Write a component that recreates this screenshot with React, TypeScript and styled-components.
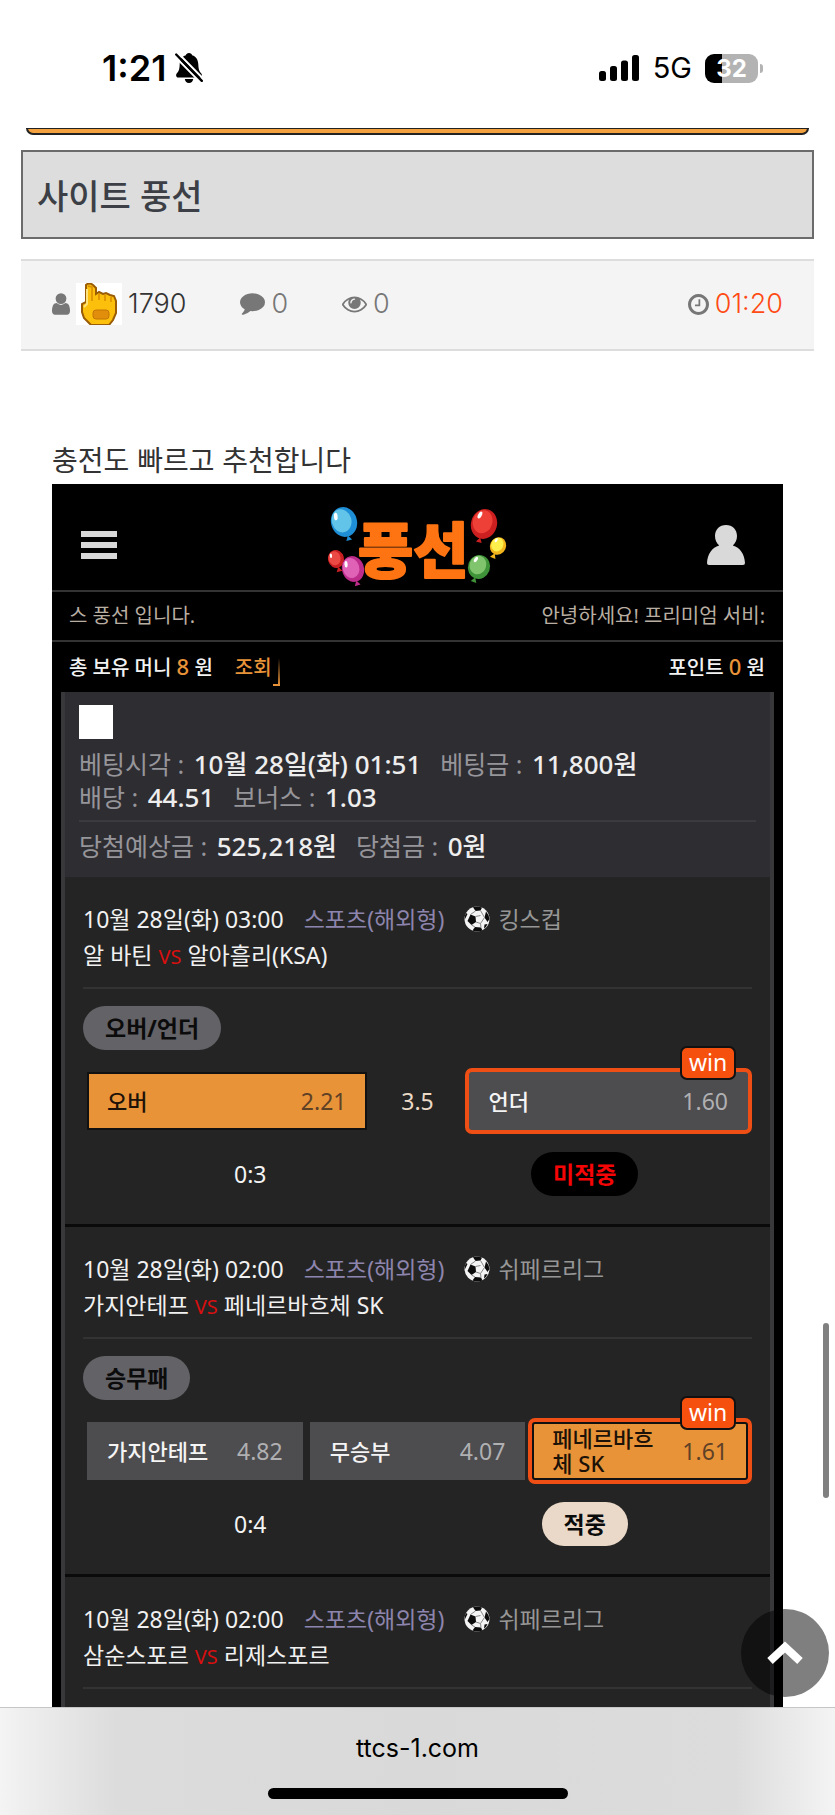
import React from "react";
import styled, { createGlobalStyle } from "styled-components";

const GlobalStyle = createGlobalStyle`
  *, *::before, *::after { box-sizing: border-box; }
  body { margin: 0; background: #fff; }
  button { border: 0; padding: 0; margin: 0; background: none; font: inherit; color: inherit; cursor: pointer; }
  svg { display: block; flex: none; }
`;

const systemFont = `Inter, "Noto Sans CJK KR", sans-serif`;
const siteFont = `"Noto Sans", "Noto Sans CJK KR", sans-serif`;

const Page = styled.div`
  display: flex;
  flex-direction: column;
  min-height: 100vh;
  font-family: ${systemFont};
  color: #333;
`;

const StatusBar = styled.header`
  display: flex;
  align-items: center;
  justify-content: space-between;
  height: 128px;
  padding: 8px 73px 0 102px;
  color: #000;
`;

const StatusGroup = styled.div<{ $gap: number }>`
  display: flex;
  align-items: center;
  gap: ${(p) => p.$gap}px;
`;

const Clock = styled.time`
  font-size: 36px;
  line-height: 40px;
  font-weight: 600;
`;

const Network = styled.span`
  font-size: 29px;
  line-height: 40px;
`;

const Battery = styled.div`
  position: relative;
  display: flex;
  align-items: center;
  justify-content: center;
  width: 53px;
  height: 29px;
  margin-right: 4px;
  border-radius: 9px;
  background: linear-gradient(90deg, #000 32%, #b3b3b3 32%);
  color: #fff;
  font-size: 24px;
  line-height: 29px;
  font-weight: 700;
  &::after {
    content: "";
    position: absolute;
    right: -5px;
    top: 10px;
    width: 3px;
    height: 9px;
    border-radius: 0 3px 3px 0;
    background: #b3b3b3;
  }
`;

const BannerEdge = styled.div`
  height: 7px;
  margin: 0 26px;
  border: 2px solid #222;
  border-top-width: 1px;
  border-radius: 0 0 9px 9px;
  background: #f3a13f;
`;

const TitleBox = styled.h1`
  margin: 15px 21px 0;
  padding: 2px 14px 0;
  border: 2px solid #6b6b6b;
  background: #ddd;
  color: #3c3f45;
  font-size: 34px;
  line-height: 86px;
  font-weight: 500;
  height: 89px;
`;

const MetaBar = styled.div`
  display: flex;
  align-items: center;
  gap: 54px;
  height: 92px;
  margin: 20px 21px 0;
  padding: 0 31px 2px;
  border: solid #ddd;
  border-width: 2px 0;
  background: #f4f4f4;
  color: #777;
  font-size: 27px;
  line-height: 32px;
  font-weight: 300;
`;

const MetaItem = styled.span<{ $color?: string; $end?: boolean }>`
  display: flex;
  align-items: center;
  gap: 6px;
  margin-left: ${(p) => (p.$end ? "auto" : "0")};
  color: ${(p) => p.$color ?? "#777"};
`;

const Article = styled.main`
  display: flex;
  flex: 1;
  flex-direction: column;
  padding: 87px 52px 0;
`;

const Lead = styled.p`
  margin: 0;
  font-size: 28px;
  line-height: 46px;
  font-weight: 400;
`;

const Shot = styled.section`
  display: flex;
  flex: 1;
  flex-direction: column;
  background: #000;
  font-family: ${siteFont};
`;

const AppHeader = styled.div`
  display: flex;
  align-items: center;
  justify-content: space-between;
  height: 108px;
  padding: 16px 38px 0 29px;
  border-bottom: 2px solid #333;
`;

const IconButton = styled.button`
  display: flex;
`;

const InfoRow = styled.div<{ $tone: string; $weight: number; $lined?: boolean }>`
  display: flex;
  align-items: center;
  justify-content: space-between;
  height: 50px;
  padding: 0 18px 0 17px;
  border-bottom: ${(p) => (p.$lined ? "2px solid #333" : "0")};
  color: ${(p) => p.$tone};
  font-size: 20px;
  line-height: 30px;
  font-weight: ${(p) => p.$weight};
`;

const Orange = styled.span`
  color: #e99339;
  font-size: 22px;
`;

const LookupButton = styled.button`
  position: relative;
  margin-left: 22px;
  padding-right: 5px;
  color: #e99339;
  &::after {
    content: "";
    position: absolute;
    right: -3px;
    bottom: -3px;
    width: 7px;
    height: 28px;
    background:
      linear-gradient(180deg, transparent, #e99339) right / 2px 100% no-repeat,
      linear-gradient(#e99339, #e99339) bottom / 100% 2px no-repeat;
  }
`;

const Slip = styled.div`
  display: flex;
  flex: 1;
  flex-direction: column;
  margin: 0 9px;
  border: solid #38373a;
  border-width: 0 4px;
  background: #242424;
`;

const Summary = styled.div`
  padding: 13px 14px 14px;
  background: #2e2d32;
  color: #eee;
  font-size: 26px;
  line-height: 33px;
`;

const SlipCheck = styled.input`
  appearance: none;
  display: block;
  width: 34px;
  height: 34px;
  margin: 0 0 9px;
  background: #fff;
`;

const SummaryLine = styled.div`
  display: flex;
  flex-wrap: wrap;
  column-gap: 19px;
  height: 33px;
`;

const SummaryRule = styled.hr`
  height: 2px;
  margin: 6px 0 8px;
  border: 0;
  background: #3b3a3f;
`;

const Fact = styled.span`
  font-weight: 500;
`;

const FactName = styled.span`
  margin-right: 3px;
  color: #96959a;
  font-size: 25px;
  font-weight: 400;
`;

const Match = styled.article<{ $last?: boolean }>`
  padding: 24px 18px ${(p) => (p.$last ? 0 : 28)}px;
  border-bottom: ${(p) => (p.$last ? "0" : "3px solid #0a0a0a")};
`;

const MatchHead = styled.div`
  padding-bottom: 14px;
  border-bottom: 2px solid #333;
  color: #f1f1f1;
  font-size: 23px;
  line-height: 36px;
`;

const MatchInfo = styled.div`
  display: flex;
  align-items: center;
  height: 36px;
`;

const Kind = styled.span`
  margin: 0 20px;
  color: #8d85ad;
`;

const League = styled.span`
  margin-left: 8px;
  color: #969696;
`;

const Teams = styled.div`
  height: 36px;
`;

const Versus = styled.span`
  margin: 0 6px;
  color: #d80f0f;
  font-size: 20px;
`;

const Pill = styled.span<{ $bg: string; $fg: string }>`
  display: inline-block;
  height: 44px;
  padding: 0 22px;
  border-radius: 22px;
  background: ${(p) => p.$bg};
  color: ${(p) => p.$fg};
  font-size: 23px;
  line-height: 44px;
  font-weight: 700;
`;

const Market = styled.div`
  display: flex;
  margin-top: 17px;
`;

const OddsGrid = styled.div<{ $columns: string; $gap: number }>`
  display: grid;
  grid-template-columns: ${(p) => p.$columns};
  gap: ${(p) => p.$gap}px;
  height: 58px;
  margin: 22px 4px;
`;

const OddsButton = styled.button<{ $picked?: boolean; $won?: boolean }>`
  position: relative;
  display: flex;
  align-items: center;
  justify-content: space-between;
  gap: 16px;
  padding: 0 ${(p) => (p.$picked ? 18 : 20)}px;
  border: ${(p) => (p.$picked ? "2px solid #111" : "0")};
  border-radius: ${(p) => (p.$won ? 3 : 0)}px;
  box-shadow: ${(p) => (p.$won ? "0 0 0 4px #ef4f14" : "none")};
  background: ${(p) => (p.$picked ? "#e99339" : "#4d4c4f")};
  color: ${(p) => (p.$picked ? "#1c1208" : "#f4f4f4")};
  font-size: 22px;
  line-height: 25px;
  font-weight: 500;
  text-align: left;
  word-break: break-all;
`;

const Rate = styled.span<{ $picked?: boolean }>`
  color: ${(p) => (p.$picked ? "#5f4126" : "#b0b0b2")};
  font-size: 23px;
  font-weight: 400;
  word-break: normal;
`;

const WinBadge = styled.span<{ $picked?: boolean }>`
  position: absolute;
  right: ${(p) => (p.$picked ? 10 : 12)}px;
  top: ${(p) => (p.$picked ? -28 : -26)}px;
  width: 56px;
  height: 34px;
  border: 2px solid #111;
  border-radius: 7px;
  background: #f6500f;
  color: #fff;
  font-size: 23px;
  line-height: 28px;
  font-weight: 400;
  text-align: center;
`;

const Baseline = styled.span`
  align-self: center;
  color: #ead9c6;
  font-size: 23px;
  text-align: center;
`;

const ResultRow = styled.div`
  display: grid;
  grid-template-columns: 1fr 1fr;
  align-items: center;
  justify-items: center;
  height: 44px;
  color: #f4f4f4;
  font-size: 23px;
`;

const TopButton = styled.button`
  position: fixed;
  right: 6px;
  bottom: 118px;
  display: flex;
  align-items: center;
  justify-content: center;
  width: 88px;
  height: 88px;
  border-radius: 50%;
  background: rgba(0, 0, 0, 0.5);
`;

const ScrollThumb = styled.div`
  position: fixed;
  right: 6px;
  bottom: 317px;
  width: 6px;
  height: 175px;
  border-radius: 3px;
  background: #808080;
`;

const BrowserBar = styled.footer`
  display: flex;
  flex-direction: column;
  align-items: center;
  justify-content: space-between;
  height: 108px;
  padding: 25px 0 16px;
  border-top: 1px solid #c6c6c6;
  background: linear-gradient(90deg, #f4f4f4 0, #f0f0f0 2%, #dcdcdc 14%, #d9d9d9 50%, #dcdcdc 88%, #f0f0f0 98%, #f4f4f4 100%);
  color: #000;
`;

const Address = styled.button`
  font-size: 25px;
  line-height: 30px;
`;

const HomeBar = styled.div`
  width: 300px;
  height: 11px;
  border-radius: 6px;
  background: #000;
`;

const BellOff = () => (
  <svg width="28" height="30" viewBox="0 0 28 30" aria-hidden="true">
    <path d="M14 0c1.700 0 2.800 1 3.100 2.200 4 1.200 6 4.600 6.200 9 .2 5.600 1.200 7.300 3 9.300 1.100 1.200.6 4-1.300 4H3c-1.900 0-2.400-2.800-1.300-4 1.800-2 2.800-3.700 3-9.300.2-4.400 2.200-7.800 6.200-9C11.200 1 12.300 0 14 0z" fill="#000" />
    <path d="M9.800 26h8.400c-.4 2.400-1.900 4-4.200 4s-3.800-1.600-4.200-4z" fill="#000" />
    <path d="M-1 2.500l27 27.500M3 0l27 27.500" stroke="#fff" strokeWidth="2" />
    <path d="M1.200 1.500l25.600 26.300" stroke="#000" strokeWidth="2.400" strokeLinecap="round" />
  </svg>
);

const Signal = () => (
  <svg width="41" height="26" viewBox="0 0 41 26" aria-hidden="true">
    <rect x="0" y="16" width="7" height="10" rx="2.500" />
    <rect x="11" y="11" width="7" height="15" rx="2.500" />
    <rect x="22" y="5.500" width="7" height="20.500" rx="2.500" />
    <rect x="33" y="0" width="7" height="26" rx="2.500" />
  </svg>
);

const UserIcon = () => (
  <svg width="18" height="22" viewBox="256 128 1280 1536" fill="#777" aria-hidden="true">
    <path d="M1536 1399q0 109-62.500 187t-150.500 78h-854q-88 0-150.500-78t-62.500-187q0-85 8.500-160.500t31.500-152 58.500-131 94-89 134.500-34.500q131 128 313 128t313-128q76 0 134.500 34.500t94 89 58.500 131 31.500 152 8.500 160.500zm-256-887q0 159-112.500 271.500t-271.500 112.500-271.500-112.500-112.500-271.500 112.500-271.500 271.500-112.500 271.500 112.500 112.500 271.500z" />
  </svg>
);

const CommentIcon = () => (
  <svg width="25" height="22" viewBox="0 256 1792 1536" fill="#777" aria-hidden="true">
    <path d="M1792 896q0 174-120 321.500t-326 233-450 85.500q-70 0-145-8-198 175-460 242-49 14-114 22-17 2-30.500-9t-17.500-29v-1q-3-4-.5-12t2-10 4.500-9.500l6-9 7-8.500 8-9q7-8 31-34.500t34.500-38 31-39.500 32.500-51 27-59 26-76q-157-89-247.500-220t-90.500-281q0-130 71-248.500t191-204.500 286-136.500 348-50.500q244 0 450 85.500t326 233 120 321.500z" />
  </svg>
);

const EyeIcon = () => (
  <svg width="25" height="17" viewBox="0 384 1792 1152" fill="#777" aria-hidden="true">
    <path d="M1664 960q-152-236-381-353 61 104 61 225 0 185-131.500 316.500t-316.500 131.500-316.500-131.500-131.500-316.500q0-121 61-225-229 117-381 353 133 205 333.500 326.500t434.500 121.500 434.500-121.500 333.500-326.500zm-720-384q0-20-14-34t-34-14q-125 0-214.500 89.500t-89.500 214.500q0 20 14 34t34 14 34-14 14-34q0-86 61-147t147-61q20 0 34-14t14-34zm848 384q0 34-20 69-140 230-376.500 368.500t-499.500 138.500-499.500-139-376.500-368q-20-35-20-69t20-69q140-229 376.500-368t499.500-139 499.500 139 376.500 368q20 35 20 69z" />
  </svg>
);

const ClockIcon = () => (
  <svg width="21" height="21" viewBox="128 128 1536 1536" fill="#777" aria-hidden="true">
    <path d="M1024 544v448q0 14-9 23t-23 9h-320q-14 0-23-9t-9-23v-64q0-14 9-23t23-9h224v-352q0-14 9-23t23-9h64q14 0 23 9t9 23zm416 352q0-148-73-273t-198-198-273-73-273 73-198 198-73 273 73 273 198 198 273 73 273-73 198-198 73-273zm224 0q0 209-103 385.500t-279.500 279.500-385.500 103-385.500-103-279.500-279.500-103-385.500 103-385.500 279.500-279.500 385.500-103 385.500 103 279.500 279.500 103 385.500z" />
  </svg>
);

const HandAvatar = () => (
  <svg width="46" height="42" viewBox="0 0 46 42" aria-hidden="true">
    <rect width="46" height="42" fill="#fff" />
    <path d="M10 2q3-3 7 0l3 3v6l3-2 4 2 3-1 4 2 4 1 2 5v12l-3 7-4 5H15l-7-7-2-6v-8l4-2V2z" fill="#fbbf0c" stroke="#9a5c05" strokeWidth="2" />
    <path d="M12 3l4 1v14M23 11v6M29 12v6M35 14v5" fill="none" stroke="#d98c00" strokeWidth="1.500" />
    <path d="M11 6v15l-3 3" fill="none" stroke="#ffe27a" strokeWidth="2" />
    <rect x="17" y="27" width="16" height="9" rx="3" fill="#e08e0b" stroke="#c57605" />
  </svg>
);

const MenuIcon = () => (
  <svg width="36" height="28" viewBox="0 0 36 28" fill="#d8d8d8" aria-hidden="true">
    <rect width="36" height="6" />
    <rect y="11" width="36" height="6" />
    <rect y="22" width="36" height="6" />
  </svg>
);

const MemberIcon = () => (
  <svg width="38" height="40" viewBox="0 0 38 40" fill="#d9d9d9" aria-hidden="true">
    <path d="M19 0c6.500 0 11 4.500 11 11 0 4-1.500 7-4.200 9.500C33 22.500 37.500 29 38 38q0 2-2 2H2q-2 0-2-2c.5-9 5-15.500 12.200-17.500C9.500 18 8 15 8 11 8 4.500 12.500 0 19 0z" />
  </svg>
);

interface BalloonProps {
  x: number;
  y: number;
  rx: number;
  ry: number;
  dark: string;
  light: string;
  tilt: number;
}

const Balloon = ({ x, y, rx, ry, dark, light, tilt }: BalloonProps) => (
  <g transform={`translate(${x} ${y}) rotate(${tilt})`}>
    <path d={`M0 ${ry - 1}l-3 5h6z`} fill={dark} />
    <ellipse rx={rx} ry={ry} fill={dark} />
    <ellipse cx={-rx * 0.15} cy={-ry * 0.12} rx={rx * 0.75} ry={ry * 0.78} fill={light} />
    <ellipse cx={-rx * 0.6} cy={-ry * 0.4} rx={rx * 0.14} ry={ry * 0.25} fill="#fff" transform="rotate(12)" />
  </g>
);

const Logo = () => (
  <svg width="198" height="88" viewBox="-14 1 198 88" role="img" aria-label="풍선">
    <Balloon x={17} y={22} rx={13} ry={15} dark="#1e8fd6" light="#62c4e8" tilt={-16} />
    <Balloon x={9} y={59} rx={8} ry={9} dark="#c91f22" light="#ea4a43" tilt={-16} />
    <Balloon x={157} y={24} rx={13} ry={15} dark="#cc1f1f" light="#ef4038" tilt={16} />
    <Balloon x={171} y={46} rx={8} ry={9} dark="#f2b61c" light="#fdf04c" tilt={24} />
    <Balloon x={152} y={67} rx={11} ry={12} dark="#3f9339" light="#80c56d" tilt={20} />
    <text x="31" y="73" fontFamily='"Noto Sans CJK KR", sans-serif' fontSize="60" fontWeight="900" fill="#ff7412" stroke="#ff7412" strokeWidth="2" strokeLinejoin="round">
      풍선
    </text>
    <Balloon x={26} y={69} rx={11} ry={13} dark="#bd2b8b" light="#df62b6" tilt={-16} />
  </svg>
);

const SoccerBall = () => (
  <svg width="26" height="26" viewBox="0 0 26 26" aria-hidden="true">
    <circle cx="13" cy="13" r="12.500" fill="#f4f4f4" />
    <path d="M6.500 8.500l5 2 .5 5.500-4.500 3-4-4z" fill="#0c0c0c" />
    <path d="M9 1.200Q14-.5 18 1.700L16.500 4.500l-5 .5zM22 5.500q3 3 3.500 7.500l-2 3-3-4.500zM11 21l6 .5 1.500 3Q13 26.500 8.500 24.500zM2 7l1.500 1L.8 13.500Q.5 10 2 7zM20.500 18.500l3-.5q-1 3-3.500 4.500z" fill="#0c0c0c" />
    <path d="M11.500 5l-5 3.500M16.500 4.500l4 7M11.500 10.500l5-1M12 16l4.500 1.500 4-6M7.500 19l3.500 2M17 21.500l-.5-4" fill="none" stroke="#888" />
  </svg>
);

interface Odds {
  name: string;
  rate: string;
  picked?: boolean;
  won?: boolean;
}

const OddsCell = ({ name, rate, picked, won }: Odds) => (
  <OddsButton type="button" $picked={picked} $won={won}>
    <span>{name}</span>
    <Rate $picked={picked}>{rate}</Rate>
    {won && <WinBadge $picked={picked}>win</WinBadge>}
  </OddsButton>
);

interface HeadProps {
  time: string;
  league: string;
  home: string;
  away: string;
}

const Head = ({ time, league, home, away }: HeadProps) => (
  <MatchHead>
    <MatchInfo>
      <span>10월 28일(화) {time}</span>
      <Kind>스포츠(해외형)</Kind>
      <SoccerBall />
      <League>{league}</League>
    </MatchInfo>
    <Teams>
      {home}
      <Versus>VS</Versus>
      {away}
    </Teams>
  </MatchHead>
);

const FactItem = ({ name, value }: { name: string; value: string }) => (
  <Fact>
    <FactName>{name} : </FactName>
    {value}
  </Fact>
);

export default function App() {
  return (
    <Page>
      <GlobalStyle />
      <StatusBar>
        <StatusGroup $gap={9}>
          <Clock>1:21</Clock>
          <BellOff />
        </StatusGroup>
        <StatusGroup $gap={13}>
          <Signal />
          <Network>5G</Network>
          <Battery>32</Battery>
        </StatusGroup>
      </StatusBar>

      <BannerEdge />
      <TitleBox>사이트 풍선</TitleBox>
      <MetaBar>
        <MetaItem $color="#333">
          <UserIcon />
          <HandAvatar />
          1790
        </MetaItem>
        <MetaItem>
          <CommentIcon />0
        </MetaItem>
        <MetaItem>
          <EyeIcon />0
        </MetaItem>
        <MetaItem $color="#ff4b14" $end>
          <ClockIcon />
          01:20
        </MetaItem>
      </MetaBar>

      <Article>
        <Lead>충전도 빠르고 추천합니다</Lead>
        <Shot>
          <AppHeader>
            <IconButton type="button" aria-label="메뉴">
              <MenuIcon />
            </IconButton>
            <Logo />
            <IconButton type="button" aria-label="내 정보">
              <MemberIcon />
            </IconButton>
          </AppHeader>
          <InfoRow $tone="#b9aea2" $weight={400} $lined>
            <span>스 풍선 입니다.</span>
            <span>안녕하세요! 프리미엄 서비:</span>
          </InfoRow>
          <InfoRow $tone="#f2f2f2" $weight={500}>
            <span>
              총 보유 머니 <Orange>8</Orange> 원<LookupButton type="button">조회</LookupButton>
            </span>
            <span>
              포인트 <Orange>0</Orange> 원
            </span>
          </InfoRow>

          <Slip>
            <Summary>
              <SlipCheck type="checkbox" aria-label="베팅 내역 선택" />
              <SummaryLine>
                <FactItem name="베팅시각" value="10월 28일(화) 01:51" />
                <FactItem name="베팅금" value="11,800원" />
              </SummaryLine>
              <SummaryLine>
                <FactItem name="배당" value="44.51" />
                <FactItem name="보너스" value="1.03" />
              </SummaryLine>
              <SummaryRule />
              <SummaryLine>
                <FactItem name="당첨예상금" value="525,218원" />
                <FactItem name="당첨금" value="0원" />
              </SummaryLine>
            </Summary>

            <Match>
              <Head time="03:00" league="킹스컵" home="알 바틴" away="알아흘리(KSA)" />
              <Market>
                <Pill $bg="#636267" $fg="#0b0b0b">오버/언더</Pill>
              </Market>
              <OddsGrid $columns="1fr 102px 1fr" $gap={0}>
                <OddsCell name="오버" rate="2.21" picked />
                <Baseline>3.5</Baseline>
                <OddsCell name="언더" rate="1.60" won />
              </OddsGrid>
              <ResultRow>
                <span>0:3</span>
                <Pill $bg="#000" $fg="#f50505">미적중</Pill>
              </ResultRow>
            </Match>

            <Match>
              <Head time="02:00" league="쉬페르리그" home="가지안테프" away="페네르바흐체 SK" />
              <Market>
                <Pill $bg="#636267" $fg="#0b0b0b">승무패</Pill>
              </Market>
              <OddsGrid $columns="1fr 1fr 1fr" $gap={7}>
                <OddsCell name="가지안테프" rate="4.82" />
                <OddsCell name="무승부" rate="4.07" />
                <OddsCell name="페네르바흐체 SK" rate="1.61" picked won />
              </OddsGrid>
              <ResultRow>
                <span>0:4</span>
                <Pill $bg="#ead9c8" $fg="#0b0b0b">적중</Pill>
              </ResultRow>
            </Match>

            <Match $last>
              <Head time="02:00" league="쉬페르리그" home="삼순스포르" away="리제스포르" />
            </Match>
          </Slip>
        </Shot>
      </Article>

      <BrowserBar>
        <Address type="button">ttcs-1.com</Address>
        <HomeBar />
      </BrowserBar>

      <ScrollThumb />
      <TopButton type="button" aria-label="맨 위로">
        <svg width="38" height="26" viewBox="0 0 38 26" aria-hidden="true">
          <path d="M4 21L19 7l15 14" fill="none" stroke="#fff" strokeWidth="8" />
        </svg>
      </TopButton>
    </Page>
  );
}
